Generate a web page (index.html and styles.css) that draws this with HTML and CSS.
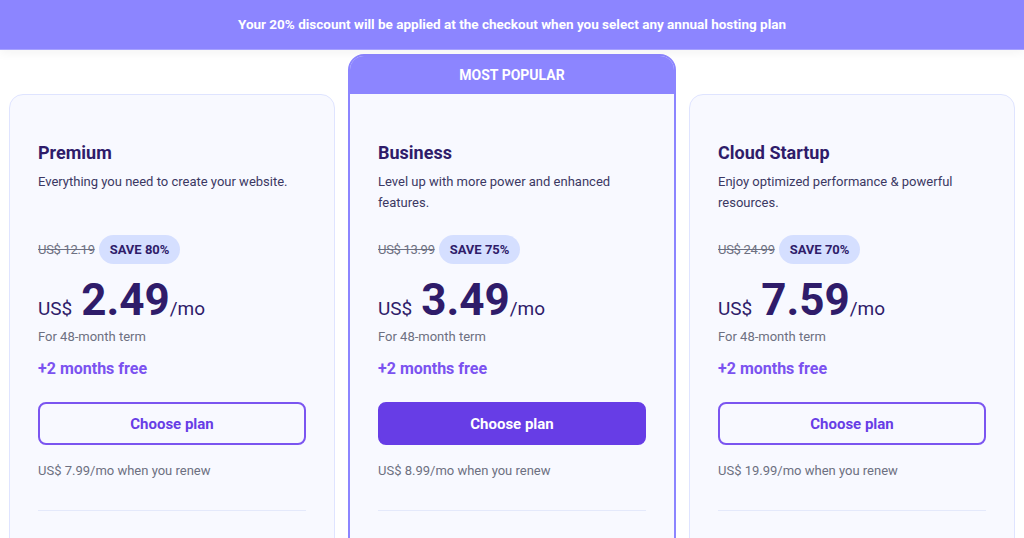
FILE: index.html
```html
<!DOCTYPE html>
<html lang="en">
<head>
  <meta charset="UTF-8">
  <title>Hosting Plans</title>
  <link rel="stylesheet" href="styles.css">
</head>
<body>

  <div class="promo-bar">Your 20% discount will be applied at the checkout when you select any annual hosting plan</div>

  <div class="plans">

    <div class="plan">
      <div class="plan-body">
        <h3 class="plan-name">Premium</h3>
        <p class="plan-desc">Everything you need to create your website.</p>
        <div class="discount">
          <span class="old-price">US$ 12.19</span>
          <span class="save">SAVE 80%</span>
        </div>
        <div class="price"><span class="cur">US$</span><span class="amount">2.49</span><span class="per">/mo</span></div>
        <p class="term">For 48-month term</p>
        <p class="bonus">+2 months free</p>
        <button class="choose">Choose plan</button>
        <p class="renew">US$ 7.99/mo when you renew</p>
        <hr class="divider">
      </div>
    </div>

    <div class="plan popular">
      <div class="popular-tag">MOST POPULAR</div>
      <div class="plan-body">
        <h3 class="plan-name">Business</h3>
        <p class="plan-desc">Level up with more power and enhanced features.</p>
        <div class="discount">
          <span class="old-price">US$ 13.99</span>
          <span class="save">SAVE 75%</span>
        </div>
        <div class="price"><span class="cur">US$</span><span class="amount">3.49</span><span class="per">/mo</span></div>
        <p class="term">For 48-month term</p>
        <p class="bonus">+2 months free</p>
        <button class="choose filled">Choose plan</button>
        <p class="renew">US$ 8.99/mo when you renew</p>
        <hr class="divider">
      </div>
    </div>

    <div class="plan">
      <div class="plan-body">
        <h3 class="plan-name">Cloud Startup</h3>
        <p class="plan-desc">Enjoy optimized performance &amp; powerful resources.</p>
        <div class="discount">
          <span class="old-price">US$ 24.99</span>
          <span class="save">SAVE 70%</span>
        </div>
        <div class="price"><span class="cur">US$</span><span class="amount">7.59</span><span class="per">/mo</span></div>
        <p class="term">For 48-month term</p>
        <p class="bonus">+2 months free</p>
        <button class="choose">Choose plan</button>
        <p class="renew">US$ 19.99/mo when you renew</p>
        <hr class="divider">
      </div>
    </div>

  </div>

</body>
</html>
```

FILE: styles.css
```css
body {
  margin: 0;
  font-family: Roboto, "Liberation Sans", sans-serif;
  background: #fff;
  color: #2f1c6a;
  height: 538px;
  overflow: hidden;
}
.promo-bar {
  height: 49px;
  line-height: 49px;
  background: #8c85ff;
  border-bottom: 1px solid #a7a2ff;
  color: #fff;
  font-size: 13.5px;
  font-weight: 700;
  text-align: center;
  box-shadow: 0 3px 10px rgba(0, 0, 0, 0.05);
  position: relative;
}
.plans {
  display: grid;
  grid-template-columns: 326px 328px 326px;
  gap: 13px;
  padding: 4px 9px 0;
}
.plan {
  margin-top: 40px;
  background: #f8f9ff;
  border: 1px solid #dfe4ff;
  border-radius: 14px;
  height: 520px;
}
.plan.popular {
  margin-top: 0;
  border: 2px solid #8c85ff;
  border-radius: 16px 16px 0 0;
}
.popular-tag {
  height: 38px;
  line-height: 38px;
  background: #8c85ff;
  color: #fff;
  font-size: 14px;
  font-weight: 700;
  text-align: center;
  border-radius: 14px 14px 0 0;
}
.plan-body {
  padding: 46px 28px 0;
}
.popular .plan-body {
  padding-top: 47px;
}
.plan-name {
  margin: 0;
  font-size: 18px;
  line-height: 24px;
  font-weight: 700;
}
.plan-desc {
  margin: 6px 0 0;
  font-size: 13px;
  line-height: 21px;
  height: 42px;
  color: #3b3863;
}
.discount {
  display: flex;
  align-items: center;
  gap: 4px;
  margin-top: 22px;
}
.old-price {
  font-size: 13px;
  letter-spacing: -0.3px;
  color: #6d7081;
  text-decoration: line-through;
}
.save {
  background: #d5dfff;
  border-radius: 15px;
  padding: 0 11px;
  height: 29px;
  line-height: 29px;
  font-size: 13px;
  font-weight: 700;
}
.price {
  display: flex;
  align-items: baseline;
  margin-top: 13px;
  height: 46px;
}
.cur {
  font-size: 19px;
  margin-right: 9px;
}
.amount {
  font-size: 44px;
  font-weight: 700;
  line-height: 46px;
}
.per {
  font-size: 19px;
}
.term {
  margin: 5px 0 0;
  font-size: 13px;
  line-height: 18px;
  color: #6d7081;
}
.bonus {
  margin: 12px 0 0;
  font-size: 16px;
  line-height: 22px;
  font-weight: 700;
  color: #7b52f0;
}
.choose {
  display: block;
  width: 100%;
  height: 43px;
  margin-top: 22px;
  border: 2px solid #7b55f0;
  border-radius: 8px;
  background: transparent;
  color: #673de6;
  font-family: inherit;
  font-size: 15px;
  font-weight: 700;
  cursor: pointer;
}
.choose.filled {
  background: #673de6;
  border-color: #673de6;
  color: #fff;
}
.renew {
  margin: 17px 0 0;
  font-size: 13px;
  line-height: 18px;
  color: #6d7081;
}
.divider {
  margin: 30px 0 0;
  border: none;
  border-top: 1px solid #e4e9fb;
}
```
